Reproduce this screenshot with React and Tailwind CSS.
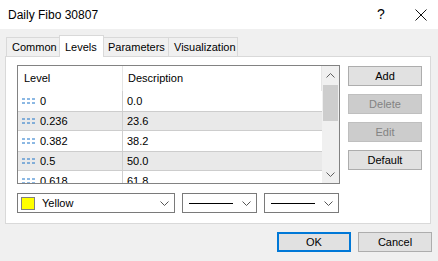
const rows = [
  { level: '0', desc: '0.0' },
  { level: '0.236', desc: '23.6' },
  { level: '0.382', desc: '38.2' },
  { level: '0.5', desc: '50.0' },
  { level: '0.618', desc: '61.8' },
];

const Chevron = ({ up = false, className = '' }) => (
  <svg width="9" height="5" viewBox="0 0 9 5" className={className}>
    <path
      d={up ? 'M0.5 4.5 L4.5 0.5 L8.5 4.5' : 'M0.5 0.5 L4.5 4.5 L8.5 0.5'}
      fill="none"
      stroke="currentColor"
      strokeWidth="1"
    />
  </svg>
);

const DashIcon = () => (
  <svg width="14" height="6" viewBox="0 0 14 6" className="shrink-0">
    <path d="M0 1 H14 M0 5 H14" stroke="#1a73c8" strokeWidth="1" strokeDasharray="3 2" />
  </svg>
);

const Button = ({ children, disabled = false, primary = false }) => (
  <div
    className={`w-[74px] h-[20px] flex items-center justify-center text-[11px] ${
      disabled
        ? 'bg-[#cccccc] border border-[#bfbfbf] text-[#838383]'
        : primary
        ? 'bg-[#e1e1e1] border-2 border-[#0078d7] text-black'
        : 'bg-[#e1e1e1] border border-[#adadad] text-black'
    }`}
  >
    {children}
  </div>
);

const Combo = ({ width, children }) => (
  <div
    className={`${width} h-[20px] border border-[#7a7a7a] bg-white flex items-center pl-[3px] pr-[5px]`}
  >
    <div className="flex-1 flex items-center">{children}</div>
    <Chevron className="text-[#555]" />
  </div>
);

export default function App() {
  return (
    <div
      className="w-[438px] h-[261px] bg-[#f0f0f0] overflow-hidden text-black"
      style={{ fontFamily: '"Liberation Sans", Arial, sans-serif' }}
    >
      {/* title bar */}
      <div className="h-[29px] bg-white flex items-center pl-[8px] text-[12px]">
        <span className="flex-1">Daily Fibo 30807</span>
        <span className="w-[12px] text-[14px] mr-[26px]">?</span>
        <svg width="12" height="12" viewBox="0 0 12 12" className="mr-[11px]">
          <path d="M0.5 0.5 L11.5 11.5 M11.5 0.5 L0.5 11.5" stroke="#111" strokeWidth="1" />
        </svg>
      </div>

      {/* tabs */}
      <div className="mt-[6px] ml-[6px] h-[21px] flex items-end text-[11px]">
        <div className="w-[54px] h-[19px] border border-b-0 border-[#d9d9d9] flex items-center pl-[5px]">
          Common
        </div>
        <div className="w-[45px] h-[22px] -ml-px -mb-px relative z-10 bg-white border border-b-0 border-[#d9d9d9] flex items-start pt-[3px] pl-[5px]">
          Levels
        </div>
        <div className="w-[66px] h-[19px] -ml-px border border-b-0 border-[#d9d9d9] flex items-center pl-[4px]">
          Parameters
        </div>
        <div className="w-[70px] h-[19px] -ml-px border border-b-0 border-[#d9d9d9] flex items-center pl-[5px]">
          Visualization
        </div>
      </div>

      {/* panel */}
      <div className="ml-[5px] w-[426px] h-[168px] bg-white border border-[#d9d9d9] pt-[8px] pl-[11px]">
        <div className="flex">
          {/* list */}
          <div className="w-[323px] h-[119px] border border-[#828282] flex text-[11px] overflow-hidden">
            <div className="flex-1 flex flex-col">
              <div className="h-[25px] flex shrink-0">
                <div className="w-[105px] pl-[6px] flex items-center border-r border-[#e5e5e5]">Level</div>
                <div className="flex-1 pl-[5px] flex items-center border-r border-[#e5e5e5]">Description</div>
              </div>
              {rows.map((r, i) => (
                <div
                  key={r.level}
                  className={`h-[20px] flex shrink-0 ${
                    i % 2 === 1 ? 'bg-[#e9e9e9] border-y border-[#cdcdcd]' : ''
                  }`}
                >
                  <div className="w-[105px] pl-[4px] flex items-center gap-[4px] border-r border-[#d0d0d0]">
                    <DashIcon />
                    <span>{r.level}</span>
                  </div>
                  <div className="flex-1 pl-[4px] flex items-center">{r.desc}</div>
                </div>
              ))}
            </div>
            {/* scrollbar */}
            <div className="w-[17px] bg-[#f0f0f0] flex flex-col items-center">
              <div className="h-[18px] flex items-center text-[#606060]">
                <Chevron up />
              </div>
              <div className="w-[15px] h-[36px] bg-[#cdcdcd] mt-[1px]" />
              <div className="flex-1" />
              <div className="h-[18px] flex items-center text-[#606060]">
                <Chevron />
              </div>
            </div>
          </div>

          {/* buttons */}
          <div className="ml-[8px] pt-[1px] flex flex-col gap-[8px]">
            <Button>Add</Button>
            <Button disabled>Delete</Button>
            <Button disabled>Edit</Button>
            <Button>Default</Button>
          </div>
        </div>

        {/* combos */}
        <div className="mt-[9px] flex gap-[7px] text-[11px]">
          <Combo width="w-[158px]">
            <div className="w-[14px] h-[13px] bg-[#ffff00] border border-[#808080]" />
            <span className="ml-[7px]">Yellow</span>
          </Combo>
          <Combo width="w-[75px]">
            <div className="ml-[3px] w-[44px] h-px bg-black" />
          </Combo>
          <Combo width="w-[75px]">
            <div className="ml-[3px] w-[44px] h-px bg-black" />
          </Combo>
        </div>
      </div>

      {/* footer */}
      <div className="mt-[8px] pr-[6px] flex justify-end gap-[7px]">
        <Button primary>OK</Button>
        <Button>Cancel</Button>
      </div>
    </div>
  );
}
